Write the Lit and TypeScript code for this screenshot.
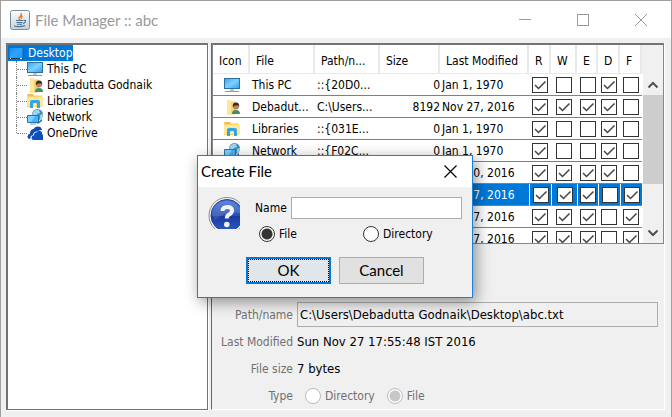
import { LitElement, html, css, svg, nothing } from "lit";
import { customElement } from "lit/decorators.js";
import { classMap } from "lit/directives/class-map.js";

const icons: Record<string, unknown> = {
  desktop: svg`<defs><linearGradient id="dk" x1="0" y1="0" x2="1" y2="1"><stop offset="0" stop-color="#0f8cf0"/><stop offset=".5" stop-color="#2fa4ff"/><stop offset="1" stop-color="#1a94f8"/></linearGradient></defs>
    <rect x="1" y="2.5" width="14" height="11" fill="url(#dk)" stroke="#0b68bd"/><path d="M1 13.5h14" stroke="#083f73"/><path d="M2 13.5h1M12 13.5h2" stroke="#fff"/>`,
  pc: svg`<defs><linearGradient id="pc" x1="0" y1="0" x2="1" y2="1"><stop offset="0" stop-color="#35a8f5"/><stop offset=".5" stop-color="#7fd0ff"/><stop offset="1" stop-color="#28a0f2"/></linearGradient></defs>
    <rect x=".5" y="1.5" width="15" height="10" fill="url(#pc)" stroke="#2f6f9c"/><path d="M6 12h4v2H6z" fill="#b9c6d0"/><path d="M1 14.5h14" stroke="#7f9cb0"/>`,
  user: svg`<path d="M3 1h4v1.500h5v13H3z" fill="#f5d372"/><path d="M3 1h4v13l-1 2-3-2z" fill="#fbe6a2"/>
    <path d="M8 15q0-4 4-4t4 4z" fill="#3f8f6c"/><circle cx="12" cy="7.500" r="3" fill="#b98259"/><path d="M8.800 8q-.5-4.500 3.200-4.500T15.200 8l-1-1.700-3.200.2z" fill="#3b2b23"/>`,
  library: svg`<path d="M0 1h6l1.500 1.500H15V14H0z" fill="#f7d36d"/><path d="M1 2h5" stroke="#e5a93c"/><path d="M0 4h16v9H0z" fill="#fde79b"/>
    <path d="M3 15V9q0-2 2-2h6q2 0 2 2v6h-3v-4q0-1-1-1H7q-1 0-1 1v4z" fill="#31a5e7"/>`,
  network: svg`<circle cx="10.500" cy="5.500" r="5.500" fill="#4790bd"/><path d="M6 3q3-3 6-2l1 3-3 1-1 3-4-1zM13 6l3-1-1 4-2 1z" fill="#9fd4ee"/>
    <path d="M10 14l5-4v2l-4 3z" fill="#2c6f9a"/><path d="M.5 6.500h11v7H.5z" fill="#45b5f7" stroke="#2177ad"/><path d="M1 7h7l-4 6H1z" fill="#7dd0ff"/><path d="M3 15h6" stroke="#7f9cb0"/>`,
  onedrive: svg`<path d="M1 13.500Q-.5 10 3 8.500 3 4.500 6.500 4q3-4 7.500-1.500l1 2.500q-3-.500-4.500 1.500-4-.5-4.500 3.500Q2.500 11 3.500 14z" fill="#0f4bab"/>
    <path d="M4.500 13q0-2.500 2.500-2.700Q7 7 10 7.200q1.500-2 3.500-1.200Q15.500 7 15 9q1.500.5 1 3v3H6.500q-2 0-2-2z" fill="#0a50c0"/>`,
};

const icon = (name: string) => html`<svg class="icon" viewBox="0 0 16 16" width="16" height="16" aria-hidden="true">${icons[name]}</svg>`;

interface FileRow { icon?: string; name?: string; path?: string; size?: string; date: string; flags: string; selected?: boolean; }

const rows: FileRow[] = [
  { icon: "pc", name: "This PC", path: "::{20D0...", size: "0", date: "Jan 1, 1970", flags: "10010" },
  { icon: "user", name: "Debadut...", path: "C:\\Users...", size: "8192", date: "Nov 27, 2016", flags: "11110" },
  { icon: "library", name: "Libraries", path: "::{031E...", size: "0", date: "Jan 1, 1970", flags: "10010" },
  { icon: "network", name: "Network", path: "::{F02C...", size: "0", date: "Jan 1, 1970", flags: "10010" },
  { date: "Nov 20, 2016", flags: "11110" },
  { date: "Nov 27, 2016", flags: "11101", selected: true },
  { date: "Nov 27, 2016", flags: "11101" },
  { date: "Nov 27, 2016", flags: "11101" },
];

const flagNames = ["R", "W", "E", "D", "F"];

const shared = css`
  * { box-sizing: border-box; }
  button, input { font: inherit; color: inherit; margin: 0; }
  .icon { display: block; flex: none; }
  input[type="radio"] {
    appearance: none; width: 16px; height: 16px; flex: none;
    border: 1px solid #333; border-radius: 50%; background: #fff;
  }
  input[type="radio"]:checked { background: radial-gradient(circle, #333 5px, #fff 6px); }
  input[type="radio"]:disabled { border-color: #bcbcbc; }
  input[type="radio"]:disabled:checked { background: radial-gradient(circle, #c8c8c8 5px, #fff 6px); }
`;

@customElement("folder-tree")
export class FolderTree extends LitElement {
  static styles = [shared, css`
    :host { display: block; }
    .root { display: flex; width: fit-content; align-items: center; height: 16px; gap: 4px; background: #0078d7; color: #fff; }
    ul { list-style: none; margin: 0; padding: 0 0 0 8px; }
    li { display: flex; align-items: center; height: 16px; position: relative; white-space: nowrap; }
    li .icon { margin: 0 4px 0 11px; }
    li::before { content: ""; position: absolute; left: 0; top: 0; bottom: 0; border-left: 1px dotted #808080; }
    li:last-child::before { bottom: 8px; }
    li::after { content: ""; position: absolute; left: 1px; width: 10px; top: 8px; border-top: 1px dotted #808080; }
  `];
  render() {
    const items = [["pc", "This PC"], ["user", "Debadutta Godnaik"], ["library", "Libraries"], ["network", "Network"], ["onedrive", "OneDrive"]];
    return html`<div class="root">${icon("desktop")}<span>Desktop</span></div>
      <ul>${items.map(([i, label]) => html`<li>${icon(i)}<span>${label}</span></li>`)}</ul>`;
  }
}

@customElement("file-table")
export class FileTable extends LitElement {
  static styles = [shared, css`
    :host { display: grid; grid-template-columns: 1fr 21px; grid-template-rows: 29px minmax(0, 1fr); overflow: hidden; background: #fff; }
    .list { grid-row: 1 / 3; min-height: 0; overflow: hidden; }
    table { width: 100%; table-layout: fixed; border-collapse: separate; border-spacing: 0; }
    .c-icon { width: 37px; } .c-text { width: 65px; } .c-size { width: 60px; } .c-date { width: 89px; }
    .c-r, .c-d, .c-f { width: 22px; } .c-w { width: 26px; } .c-e { width: 21px; }
    th, td { padding: 0 0 0 2px; overflow: hidden; white-space: nowrap; text-align: left; font-weight: normal; }
    th { height: 29px; padding: 4px 0 0 6px; border-right: 2px solid #e9e9e9; border-bottom: 1px solid #e9e9e9; }
    td { height: 22px; border-bottom: 1px solid #808080; line-height: 16px; }
    .num { text-align: right; padding: 0; }
    .center .icon { margin: 0 auto; }
    .center, .flag { padding: 0; }
    .flag { text-align: center; }
    .flag input {
      appearance: none; display: block; margin: 0 auto; width: 16px; height: 16px; border: 1px solid #333; background: #fff;
    }
    .flag input:checked {
      background: #fff url("data:image/svg+xml,%3Csvg xmlns='http://www.w3.org/2000/svg' width='14' height='14'%3E%3Cpath d='M2 7l3.500 3.500 7-7' fill='none' stroke='%23444' stroke-width='1.500'/%3E%3C/svg%3E");
    }
    .selected td { background: #0078d7; color: #fff; }
    .selected .flag { border-left: 1px solid #fff; }
    .corner { background: #f0f0f0; }
    .bar { display: flex; flex-direction: column; background: #f0f0f0; min-height: 0; border-left: 1px solid #fff; }
    .bar button { border: 0; padding: 0; background: #f0f0f0; height: 21px; display: grid; place-items: center; flex: none; }
    .thumb { height: 89px; background: #cdcdcd; }
    .spacer { flex: 1; }
  `];
  render() {
    return html`
      <div class="list"><table>
        <colgroup><col class="c-icon"><col class="c-text"><col class="c-text"><col class="c-size"><col class="c-date">
          <col class="c-r"><col class="c-w"><col class="c-e"><col class="c-d"><col class="c-f"></colgroup>
        <thead><tr>${["Icon", "File", "Path/n...", "Size", "Last Modified", ...flagNames].map((h) => html`<th scope="col">${h}</th>`)}</tr></thead>
        <tbody>${rows.map((r) => html`<tr class=${classMap({ selected: !!r.selected })}>
          <td class="center">${r.icon ? icon(r.icon) : nothing}</td>
          <td>${r.name}</td><td>${r.path}</td><td class="num">${r.size}</td><td>${r.date}</td>
          ${flagNames.map((n, i) => html`<td class="flag"><input type="checkbox" aria-label=${n} .checked=${r.flags[i] === "1"}></td>`)}
        </tr>`)}</tbody>
      </table></div>
      <div class="corner"></div>
      <div class="bar">
        <button aria-label="Scroll up"><svg width="12" height="8" viewBox="0 0 12 8"><path d="M1.500 6.500L6 2l4.500 4.500" fill="none" stroke="#505050" stroke-width="2"/></svg></button>
        <div class="thumb"></div><div class="spacer"></div>
        <button aria-label="Scroll down"><svg width="12" height="8" viewBox="0 0 12 8"><path d="M1.500 1.500L6 6l4.500-4.500" fill="none" stroke="#505050" stroke-width="2"/></svg></button>
      </div>`;
  }
}

@customElement("file-details")
export class FileDetails extends LitElement {
  static styles = [shared, css`
    :host { display: grid; grid-template-columns: 81px 1fr; column-gap: 4px; grid-auto-rows: 27px; align-items: center; padding: 57px 6px 0 0; }
    .label { text-align: right; color: #707070; white-space: nowrap; }
    .value { font-size: 13px; }
    .path { width: 100%; height: 25px; border: 1px solid #adadad; background: #f0f0f0; padding: 0 2px; outline: none; }
    .types { display: flex; gap: 12px; padding-left: 8px; color: #707070; }
    .types label { display: flex; align-items: center; gap: 4px; }
  `];
  render() {
    return html`
      <label class="label" for="path">Path/name</label><input class="path value" id="path" readonly value="C:\\Users\\Debadutta Godnaik\\Desktop\\abc.txt">
      <span class="label">Last Modified</span><span class="value">Sun Nov 27 17:55:48 IST 2016</span>
      <span class="label">File size</span><span class="value">7 bytes</span>
      <span class="label">Type</span>
      <div class="types"><label><input type="radio" name="type" disabled>Directory</label><label><input type="radio" name="type" disabled checked>File</label></div>`;
  }
}

@customElement("create-file-dialog")
export class CreateFileDialog extends LitElement {
  static styles = [shared, css`
    :host { display: block; width: 276px; border: 1px solid #1a80d6; background: #f0f0f0; box-shadow: 3px 4px 14px rgba(0,0,0,.42); }
    header { display: flex; align-items: center; justify-content: space-between; height: 31px; padding: 0 15px 0 3px; background: #fff; }
    h2 { margin: 0; font: 15px Lato, sans-serif; }
    .close { border: 0; padding: 0; background: none; display: block; }
    .close svg { display: block; }
    .body { display: grid; grid-template-columns: 32px 1fr; column-gap: 15px; padding: 10px 10px 0; }
    .name { display: flex; align-items: center; gap: 4px; height: 22px; }
    .name input { flex: 1; min-width: 0; height: 22px; border: 1px solid #adadad; background: #fff; outline: none; }
    .kinds { display: grid; grid-template-columns: 104px 1fr; padding: 7px 0 0 4px; }
    .kinds label { display: flex; align-items: center; gap: 4px; height: 16px; }
    .actions { display: flex; justify-content: center; gap: 8px; padding: 15px 0 13px; }
    .actions button { width: 85px; height: 27px; padding: 0; border: 1px solid #adadad; background: #e1e1e1; font: 15px Lato, sans-serif; }
    .actions .ok { border: 2px solid #0078d7; background: #e1e6ea; outline: 1px dotted #000; outline-offset: -3px; }
  `];
  render() {
    return html`
      <header><h2>Create File</h2>
        <button class="close" aria-label="Close"><svg width="13" height="13" viewBox="0 0 13 13"><path d="M.5.500l12 12M12.500.500l-12 12" stroke="#000" fill="none" stroke-width="1.200"/></svg></button></header>
      <div class="body">
        <svg width="32" height="32" viewBox="0 0 32 32" aria-hidden="true">
          <defs><linearGradient id="q" x1="0" y1="0" x2="0" y2="1"><stop offset="0" stop-color="#4a78d8"/><stop offset=".5" stop-color="#2a50b4"/><stop offset=".52" stop-color="#1a3a9c"/><stop offset="1" stop-color="#2c5cc8"/></linearGradient></defs>
          <circle cx="19" cy="18.500" r="18" fill="#f4f4f4" stroke="#8c8c8c"/><circle cx="19" cy="18.500" r="16" fill="url(#q)" stroke="#20409a"/>
          <path d="M4 17Q5 5 18 4q9 0 14 7v5Q17 14 7 23z" fill="#fff" opacity=".12"/>
          <path d="M14.500 14q0-4 5-4 4.500 0 4.500 3.500 0 2.500-3 4-2.200 1.200-2.200 4" fill="none" stroke="#f2f2f2" stroke-width="4"/><circle cx="18.800" cy="27.500" r="2.800" fill="#f2f2f2"/>
        </svg>
        <div>
          <div class="name"><label for="name">Name</label><input id="name" type="text"></div>
          <div class="kinds"><label><input type="radio" name="kind" checked>File</label><label><input type="radio" name="kind">Directory</label></div>
        </div>
      </div>
      <div class="actions"><button class="ok">OK</button><button>Cancel</button></div>`;
  }
}

@customElement("app-root")
export class AppRoot extends LitElement {
  static styles = [shared, css`
    :host { display: flex; flex-direction: column; position: relative; height: 100vh; overflow: hidden; box-sizing: border-box;
      border: solid #a0a0a0; border-width: 1px 1px 0; background: #f0f0f0; color: #000; font: 12px/16px "DejaVu Sans Condensed", "DejaVu Sans", sans-serif; }
    .title { display: flex; align-items: center; height: 37px; padding: 0 24px 0 9px; background: #fff; color: #999; flex: none; }
    h1 { flex: 1; margin: 0 0 0 5px; font: 15px Lato, sans-serif; }
    .controls { display: flex; gap: 46px; }
    .controls button { border: 0; padding: 0; background: none; }
    .controls svg { display: block; }
    .split { flex: 1; min-height: 0; display: grid; grid-template-columns: 202px 1fr; grid-template-rows: minmax(0, 1fr); gap: 3px; padding: 5px 6px 7px 5px; }
    .tree { border: 2px solid #707478; border-width: 2px 1px 1px 2px; background: #fff; box-shadow: 1px 1px #fff; }
    .right { display: flex; flex-direction: column; min-width: 0; min-height: 0; border-left: 1px solid #696969; border-right: 1px solid #fff; border-bottom: 1px solid #fff; }
    file-table { flex: 1; min-height: 0; border: 1px solid #828790; border-top: 2px solid #707478; }
    file-details { flex: none; }
    .overlay { position: absolute; inset: 0; display: grid; place-items: center; padding: 34px 2px 0 0; }
  `];
  render() {
    return html`
      <div class="title">
        <svg width="20" height="20" viewBox="0 0 20 20" aria-hidden="true">
          <defs><linearGradient id="jv" x1="0" y1="0" x2="0" y2="1"><stop offset="0" stop-color="#fdfdfd"/><stop offset="1" stop-color="#c5d0da"/></linearGradient></defs>
          <rect x=".5" y=".5" width="19" height="19" rx="2" fill="url(#jv)" stroke="#7a8b99"/>
          <path d="M11 3q1 2-1 3.500T10 10M12.500 6q-2 1-1.200 3" fill="none" stroke="#e8812c" stroke-width="1.400"/>
          <path d="M6 10.500h7M6.500 12.500h6M7 14.200h5M4 16q6 1.500 11-.5M13.500 10.500q2.500-.500 2 1t-2.500 2" fill="none" stroke="#4a7292" stroke-width="1.100"/>
        </svg>
        <h1>File Manager :: abc</h1>
        <div class="controls">
          <button aria-label="Minimize"><svg width="12" height="12" viewBox="0 0 12 12"><path d="M0 5.500h12" stroke="#999"/></svg></button>
          <button aria-label="Maximize"><svg width="12" height="12" viewBox="0 0 12 12"><rect x=".5" y=".5" width="11" height="11" fill="none" stroke="#999"/></svg></button>
          <button aria-label="Close"><svg width="12" height="12" viewBox="0 0 12 12"><path d="M0 0l12 12M12 0L0 12" stroke="#999"/></svg></button>
        </div>
      </div>
      <div class="split">
        <folder-tree class="tree"></folder-tree>
        <div class="right"><file-table></file-table><file-details></file-details></div>
      </div>
      <div class="overlay"><create-file-dialog role="dialog" aria-label="Create File"></create-file-dialog></div>`;
  }
}
